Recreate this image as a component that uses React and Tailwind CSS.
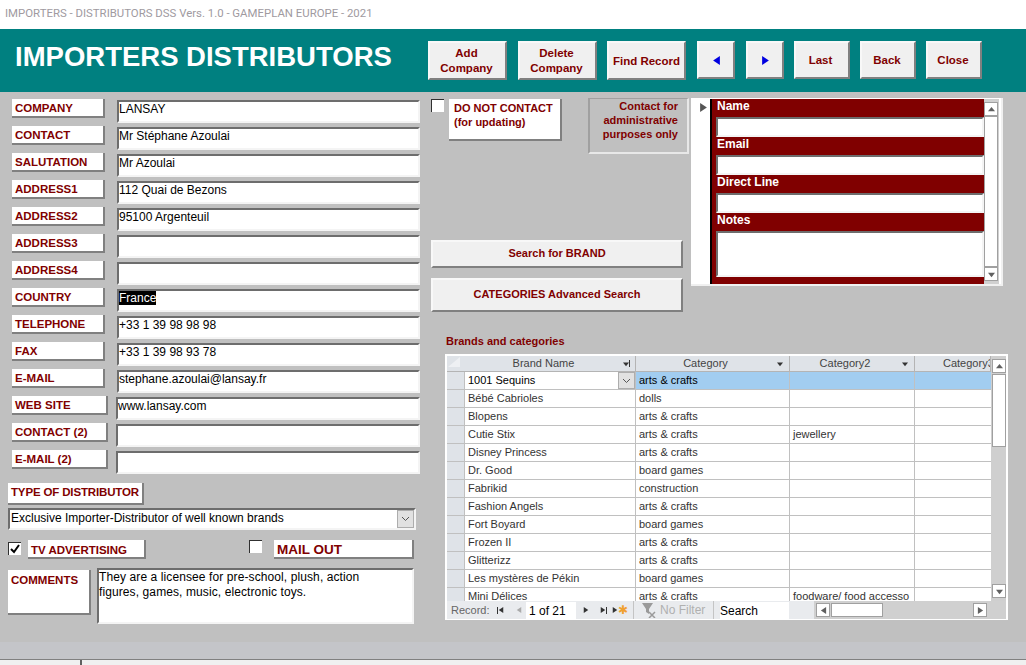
import React from "react";

const raised = "bg-white border-r-2 border-b-2 border-r-[#808080] border-b-[#808080]";
const sunken =
  "bg-white border-2 border-t-[#6d6d6d] border-l-[#6d6d6d] border-r-[#f4f4f4] border-b-[#f4f4f4]";
const button =
  "bg-[#f0f0f0] border-2 border-t-[#f8f8f8] border-l-[#f8f8f8] border-r-[#808080] border-b-[#808080] text-[#800000] font-bold text-[11.5px] flex items-center justify-center text-center leading-[15px]";

const fields = [
  { label: "COMPANY", value: "LANSAY" },
  { label: "CONTACT", value: "Mr Stéphane Azoulai" },
  { label: "SALUTATION", value: "Mr Azoulai" },
  { label: "ADDRESS1", value: "112 Quai de Bezons" },
  { label: "ADDRESS2", value: "95100 Argenteuil" },
  { label: "ADDRESS3", value: "" },
  { label: "ADDRESS4", value: "" },
  { label: "COUNTRY", value: "France", selected: true },
  { label: "TELEPHONE", value: "+33 1 39 98 98 98" },
  { label: "FAX", value: "+33 1 39 98 93 78" },
  { label: "E-MAIL", value: "stephane.azoulai@lansay.fr" },
  { label: "WEB SITE", value: "www.lansay.com", wide: true },
  { label: "CONTACT (2)", value: "", wide: true },
  { label: "E-MAIL (2)", value: "", wide: true },
];

const brands = [
  ["1001 Sequins", "arts & crafts", ""],
  ["Bébé Cabrioles", "dolls", ""],
  ["Blopens", "arts & crafts", ""],
  ["Cutie Stix", "arts & crafts", "jewellery"],
  ["Disney Princess", "arts & crafts", ""],
  ["Dr. Good", "board games", ""],
  ["Fabrikid", "construction", ""],
  ["Fashion Angels", "arts & crafts", ""],
  ["Fort Boyard", "board games", ""],
  ["Frozen II", "arts & crafts", ""],
  ["Glitterizz", "arts & crafts", ""],
  ["Les mystères de Pékin", "board games", ""],
  ["Mini Délices", "arts & crafts", "foodware/ food accesso"],
];

const Tri = ({ dir = "right", size = 7, color = "#404040" }) => {
  const points = {
    right: "1,0 7,4 1,8",
    left: "7,0 1,4 7,8",
    up: "0,6 4,1 8,6",
    down: "0,2 8,2 4,7",
  };
  return (
    <svg width={size} height={size} viewBox="0 0 8 8" className="shrink-0">
      <polygon points={points[dir]} fill={color} />
    </svg>
  );
};

const Check = ({ checked }) => (
  <div className="w-[13px] h-[13px] bg-white border-t border-l border-t-[#303030] border-l-[#303030] flex items-center justify-center shrink-0">
    {checked && (
      <svg width="10" height="10" viewBox="0 0 10 10">
        <path d="M1 5 L4 8 L9 1" stroke="#000" strokeWidth="2" fill="none" />
      </svg>
    )}
  </div>
);

const Chevron = ({ className }) => (
  <div className={"bg-[#e1e1e1] border border-[#adadad] flex items-center justify-center shrink-0 " + className}>
    <svg width="9" height="6" viewBox="0 0 9 6">
      <path d="M1 1 L4.5 4.5 L8 1" stroke="#555" fill="none" />
    </svg>
  </div>
);

const FieldRow = ({ field }) => (
  <div className="flex items-start h-[27px]">
    <div
      className={
        raised +
        " h-[19px] ml-1 pl-[3px] pt-px text-[11.5px] font-bold text-[#800000] leading-[17px] " +
        (field.wide ? "w-[96px]" : "w-[93px]")
      }
    >
      {field.label}
    </div>
    <div
      className={
        sunken +
        " h-[23px] mt-px text-xs leading-[15px] text-black " +
        (field.wide ? "w-[304px] ml-2" : "w-[303px] ml-3")
      }
    >
      {field.selected ? <span className="bg-black text-white">{field.value}</span> : field.value}
    </div>
  </div>
);

const SubField = ({ label, tall }) => (
  <div>
    <div className="h-[18px] pl-[5px] text-xs font-bold leading-[14px] text-white">{label}</div>
    <div className={sunken + " ml-1 " + (tall ? "h-[46px]" : "h-5")} />
  </div>
);

const ScrollBtn = ({ dir }) => (
  <div className="w-[14px] h-[14px] bg-white border border-[#a0a0a0] flex items-center justify-center shrink-0">
    <Tri dir={dir} size={7} color="#606060" />
  </div>
);

const HeaderCell = ({ children, icon, pad }) => (
  <div className="flex items-center border-r border-[#b4b4b4] text-[11px] text-[#444] min-w-0 overflow-hidden">
    <span className={"flex-1 whitespace-nowrap text-center " + pad}>{children}</span>
    {icon}
  </div>
);

const Datasheet = () => (
  <div className="ml-[17px] mt-[7px] w-[563px] h-[266px] border-2 border-white bg-[#cfcfcf] flex flex-col">
    <div className="flex h-[245px]">
      <div className="w-[544px] overflow-hidden">
        <div className="grid grid-cols-[18px_171px_154px_125px_76px] h-[16px] bg-[#dfe3e8] border-b border-[#b4b4b4]">
          <div className="border-r border-[#dfe3e8] flex justify-end items-start pt-px pr-[3px]">
            <svg width="13" height="11" viewBox="0 0 13 11">
              <polygon points="12,0 12,10 0,10" fill="#eef0f3" />
            </svg>
          </div>
          <HeaderCell
            pad="pr-px"
            icon={
              <div className="flex items-center mr-[5px]">
                <Tri dir="down" size={6} color="#333" />
                <div className="w-px h-[7px] bg-[#333]" />
              </div>
            }
          >
            Brand Name
          </HeaderCell>
          <HeaderCell pad="pr-[2px]" icon={<div className="mr-[6px]"><Tri dir="down" size={6} color="#333" /></div>}>
            Category
          </HeaderCell>
          <HeaderCell pad="pr-[2px]" icon={<div className="mr-[6px]"><Tri dir="down" size={6} color="#333" /></div>}>
            Category2
          </HeaderCell>
          <HeaderCell pad="pl-[28px]">Category3</HeaderCell>
        </div>
        <div className="h-[229px] overflow-hidden">
          {brands.map((row, i) => (
            <div
              key={row[0]}
              className={
                "grid grid-cols-[18px_171px_154px_125px_76px] grid-rows-[17px] h-[18px] border-b border-[#c0c0c0] text-[11px] leading-[17px] " +
                (i === 0 ? "text-black" : "text-[#333]")
              }
            >
              <div className="bg-[#dfe3e8] border-r border-[#c0c0c0]" />
              <div className="bg-white border-r border-[#c0c0c0] pl-[3px] flex justify-between">
                <span>{row[0]}</span>
                {i === 0 && <Chevron className="w-[17px] h-[17px]" />}
              </div>
              <div className={"border-r border-[#c0c0c0] pl-[3px] " + (i === 0 ? "bg-[#a2cdf0]" : "bg-white")}>{row[1]}</div>
              <div className={"border-r border-[#c0c0c0] pl-[3px] whitespace-nowrap " + (i === 0 ? "bg-[#a2cdf0]" : "bg-white")}>
                {row[2]}
              </div>
              <div className={i === 0 ? "bg-[#a2cdf0]" : "bg-white"} />
            </div>
          ))}
        </div>
      </div>
      <div className="ml-px flex flex-col w-[14px] pt-[3px] pb-[3px]">
        <ScrollBtn dir="up" />
        <div className="w-[14px] h-[73px] mt-px bg-white border border-[#a0a0a0]" />
        <div className="flex-1" />
        <ScrollBtn dir="down" />
      </div>
    </div>
    <div className="flex items-center h-[18px] bg-[#e9ebee] text-[11px] leading-[18px] text-[#666]">
      <span className="ml-[4px] w-[46px]">Record:</span>
      <div className="flex items-center w-[27px] gap-[12px]">
        <div className="flex items-center">
          <div className="w-px h-[7px] bg-[#333]" />
          <Tri dir="left" size={6} color="#333" />
        </div>
        <Tri dir="left" size={6} color="#aaa" />
      </div>
      <div className="w-[50px] h-[17px] bg-white ml-[2px] pl-[3px] text-xs text-black leading-[18px]">1 of 21</div>
      <div className="flex items-center ml-[7px] w-[45px]">
        <Tri dir="right" size={6} color="#333" />
        <div className="flex items-center ml-[11px]">
          <Tri dir="right" size={6} color="#333" />
          <div className="w-px h-[7px] bg-[#333]" />
        </div>
        <div className="flex items-center ml-[5px]">
          <Tri dir="right" size={6} color="#333" />
          <span className="text-[#f0a030] text-xs leading-3">✱</span>
        </div>
      </div>
      <div className="w-px h-[18px] bg-[#c4c4c4] ml-[5px]" />
      <div className="flex items-center w-[79px] pl-2 text-xs text-[#b0b0b0]">
        <svg width="14" height="16" viewBox="0 0 14 16" className="mr-1 shrink-0">
          <path d="M0 1 H11 L7 7 V12 L4 10 V7 Z" fill="#9a9a9a" />
          <path d="M7 10 L13 16 M13 10 L7 16" stroke="#9a9a9a" strokeWidth="1.5" />
        </svg>
        <span>No Filter</span>
      </div>
      <div className="w-px h-[18px] bg-[#c4c4c4]" />
      <div className="w-[69px] h-[17px] bg-white ml-[6px] text-xs text-black leading-[18px]">Search</div>
      <div className="flex-1 h-[18px] ml-[25px] bg-[#d0d0d0] flex items-center pr-[19px] pl-[2px]">
        <ScrollBtn dir="left" />
        <div className="w-[52px] h-[14px] bg-white border border-[#a0a0a0] ml-px" />
        <div className="flex-1" />
        <ScrollBtn dir="right" />
      </div>
    </div>
  </div>
);

export default function App() {
  return (
    <div className="w-full h-[665px] overflow-hidden flex flex-col bg-[#c0c0c0] font-['Liberation_Sans',Arial,sans-serif]">
      <div className="h-[29px] shrink-0 bg-white pl-[5px] text-[11.4px] leading-[27px] text-[#a09a9f] font-['Roboto',sans-serif]">
        IMPORTERS - DISTRIBUTORS DSS Vers. 1.0 - GAMEPLAN EUROPE - 2021
      </div>

      <div className="h-[63px] shrink-0 bg-[#008080] flex pt-3">
        <h1 className="w-[428px] pl-[15px] text-[27.5px] leading-[32px] font-bold text-white">IMPORTERS DISTRIBUTORS</h1>
        <div className={button + " w-[79px] h-[39px] pr-[2px]"}>Add<br />Company</div>
        <div className={button + " w-[79px] h-[39px] ml-[11px] pr-[2px]"}>Delete<br />Company</div>
        <div className={button + " w-[79px] h-[39px] ml-[10px] pt-px"}>Find Record</div>
        <div className={button + " w-[38px] h-[38px] ml-[11px]"}><Tri dir="left" size={9} color="#0000e0" /></div>
        <div className={button + " w-[38px] h-[38px] ml-[11px]"}><Tri dir="right" size={9} color="#0000e0" /></div>
        <div className={button + " w-[56px] h-[38px] ml-[10px] pr-[3px]"}>Last</div>
        <div className={button + " w-[56px] h-[38px] ml-[10px] pr-[2px]"}>Back</div>
        <div className={button + " w-[56px] h-[38px] ml-[10px] pr-[2px]"}>Close</div>
      </div>

      <div className="flex-1 min-h-0 flex">
        <div className="w-[428px] pl-2 pt-[7px]">
          {fields.map((f) => (
            <FieldRow key={f.label} field={f} />
          ))}

          <div className={raised + " w-[136px] h-[22px] mt-[6px] pl-[3px] text-[11.5px] tracking-[-0.15px] whitespace-nowrap font-bold text-[#800000] leading-[19px]"}>
            TYPE OF DISTRIBUTOR
          </div>
          <div className={sunken + " w-[408px] h-[22px] mt-[3px] pl-px text-xs text-black leading-[16px] flex justify-between"}>
            <span>Exclusive Importer-Distributor of well known brands</span>
            <Chevron className="w-[17px] h-[18px]" />
          </div>

          <div className="flex items-start mt-[10px] h-[19px]">
            <div className="mt-[2px]"><Check checked /></div>
            <div className={raised + " w-[118px] h-[19px] ml-[7px] pl-[3px] pt-px text-[11.5px] font-bold text-[#800000] leading-[18px]"}>
              TV ADVERTISING
            </div>
            <div className="ml-[103px]"><Check /></div>
            <div className={raised + " w-[140px] h-[19px] ml-3 pl-[3px] pt-px text-[13.5px] font-bold text-[#800000] leading-[18px]"}>
              MAIL OUT
            </div>
          </div>

          <div className="flex items-start mt-[9px]">
            <div className={raised + " w-[83px] h-[45px] mt-[2px] pl-[3px] pt-px text-[11.5px] font-bold text-[#800000] leading-[18px]"}>
              COMMENTS
            </div>
            <div className={sunken + " w-[317px] h-[56px] ml-[6px] text-xs tracking-[0.1px] text-black leading-[15px]"}>
              They are a licensee for pre-school, plush, action
              <br />
              figures, games, music, electronic toys.
            </div>
          </div>
        </div>

        <div className="flex-1">
          <div className="flex pt-[6px]">
            <div className="w-[263px] pl-[3px] pt-px">
              <div className="flex items-start">
                <Check />
                <div className={raised + " w-[113px] h-[42px] ml-[5px] pl-[5px] pt-[2px] text-[11px] font-bold text-[#800000] leading-[14px]"}>
                  DO NOT CONTACT
                  <br />
                  (for updating)
                </div>
                <div className="w-[101px] h-[56px] ml-[26px] -mt-px bg-[#c0c0c0] border-x-2 border-b-2 border-t border-t-[#a0a0a0] border-l-[#a0a0a0] border-r-[#e8e8e8] border-b-[#e8e8e8] pr-[9px] text-right text-[11px] font-bold text-[#800000] leading-[14px]">
                  Contact for
                  <br />
                  administrative
                  <br />
                  purposes only
                </div>
              </div>
              <div className={button + " w-[252px] h-[28px] mt-[86px] pb-px text-[11px]"}>Search for BRAND</div>
              <div className={button + " w-[252px] h-[34px] mt-[10px] pb-px text-[11px]"}>CATEGORIES Advanced Search</div>
            </div>

            <div className="w-[312px] h-[188px] bg-white border-b-2 border-r-2 border-[#f0f0f0] flex">
              <div className="w-[19px] pt-[5px] pl-[8px]">
                <Tri dir="right" size={9} color="#555" />
              </div>
              <div className="w-[274px] h-[185px] mt-px bg-[#800000] border-l-2 border-l-black">
                <SubField label="Name" />
                <SubField label="Email" />
                <SubField label="Direct Line" />
                <SubField label="Notes" tall />
              </div>
              <div className="w-[15px] h-[185px] mt-px bg-[#d0d0d0] flex flex-col pt-[3px] pb-[3px]">
                <ScrollBtn dir="up" />
                <div className="w-[14px] h-[152px] bg-white border border-[#a0a0a0]" />
                <div className="flex-1" />
                <ScrollBtn dir="down" />
              </div>
            </div>
          </div>

          <div className="ml-[18px] mt-[23px] h-3 text-[11px] font-bold text-[#800000] leading-3">Brands and categories</div>
          <Datasheet />
        </div>
      </div>

      <div className="h-[18px] shrink-0 bg-[#c4c5c9] border-b border-[#808080]" />
      <div className="h-[5px] shrink-0 bg-[#f0f0f0] flex">
        <div className="ml-[80px] w-[2px] bg-[#606060]" />
      </div>
    </div>
  );
}
